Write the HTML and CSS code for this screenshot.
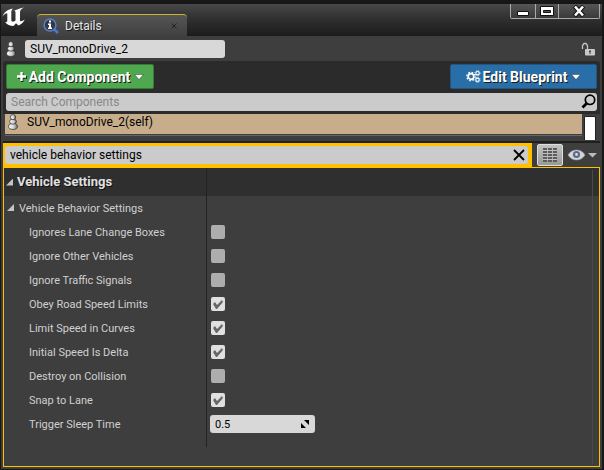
FILE: index.html
```html
<!DOCTYPE html>
<html lang="en">
<head>
<meta charset="utf-8">
<title>Details</title>
<link rel="stylesheet" href="styles.css">
</head>
<body>
<svg class="defs" aria-hidden="true">
  <defs>
    <linearGradient id="metal" x1="0" x2="1" y1="0" y2="0">
      <stop offset="0" stop-color="#ffffff"/><stop offset=".6" stop-color="#d0d0d0"/><stop offset="1" stop-color="#666"/>
    </linearGradient>
    <symbol id="pawn" viewBox="0 0 10 16">
      <g fill="url(#metal)" stroke="#222" stroke-width=".7">
        <ellipse cx="5" cy="12.4" rx="4.4" ry="3"/><ellipse cx="5" cy="7.6" rx="3.4" ry="2.6"/><circle cx="5" cy="3.2" r="2.6"/>
      </g>
    </symbol>
  </defs>
</svg>
<div class="window">
  <header class="titlebar">
    <svg class="logo" viewBox="0 0 24 22" role="img" aria-label="Unreal">
      <path fill="#fff" d="M.5 11.500C2 7 5.500 4.500 11 3.500 9.500 5 9.300 6 9.300 7.500V15c0 2 2.500 2.200 4.200.5V7.500c0-1.200-.5-1.700-1.500-1.500C14 4.500 17 3.700 22 2.500c-2.500 1.300-4 2.500-4 5V15c0 1.600 1.500 1.800 4.800-.5C21.500 17.500 19 19.500 16.500 20.500L14 18.300 11.500 21C8 20.800 5 19.500 3 17.200c1.500.2 2.300-.4 2.300-2V9c0-1.500-2.300-.5-4.800 2.500z"/>
    </svg>
    <div class="tab">
      <svg class="info" viewBox="0 0 16 16" aria-hidden="true">
        <path d="M11 11l4 4" stroke="#4a75d0" stroke-width="2.6"/>
        <circle cx="7" cy="7" r="5.9" fill="#343942" stroke="#5580cc" stroke-width="1.5"/>
        <path d="M6 2.5h2v2H6zM5 5.5h3v4h1v1.500H5V9.500h1V7H5z" fill="#fff"/>
      </svg>
      <span class="tab-name">Details</span>
      <button class="tab-close" aria-label="Close tab"><svg viewBox="0 0 6 6"><path d="M.5.5l5 5m0-5l-5 5" stroke="#222" stroke-width="1"/></svg></button>
    </div>
    <div class="controls">
      <button class="control" aria-label="Minimize"><svg viewBox="0 0 14 12"><path d="M1.500 6.500h11v4h-11z" fill="#fff" stroke="#111"/></svg></button>
      <button class="control narrow" aria-label="Maximize"><svg viewBox="0 0 14 12"><path d="M.5 1.500h13v9H.5z" fill="#fff" stroke="#111"/><path d="M3.500 5.500h7v2h-7z" fill="#555" stroke="#111"/></svg></button>
      <button class="control wide" aria-label="Close"><svg viewBox="0 0 14 12"><path d="M2.500 1l9 10m0-10l-9 10" stroke="#111" stroke-width="4.500"/><path d="M3 1.500l8 9m0-9l-8 9" stroke="#fff" stroke-width="2.600"/></svg></button>
    </div>
  </header>

  <main class="panel">
    <div class="name-row">
      <svg class="pawn"><use href="#pawn"/></svg>
      <input class="field name" type="text" aria-label="Actor name" value="SUV_monoDrive_2">
      <button class="lock" aria-label="Lock"><svg viewBox="0 0 14 14"><path d="M1.500 7V3.500L3 1.500h2L6.500 3.500V7" fill="none" stroke="#c4c4c4" stroke-width="1.300"/><rect x="4" y="7" width="10" height="6.500" rx="1" fill="#c8c8c8"/><path d="M8 8.500h2v1.500H8zM8.500 10h1v2h-1z" fill="#444"/></svg></button>
    </div>

    <section class="components">
      <div class="actions">
        <button class="action green">
          <svg class="plus" viewBox="0 0 11 11"><path d="M6.200 2v9M2 6.500h9" stroke="#1a1a1a" stroke-width="2.400"/><path d="M5.500 1v9M1 5.500h9" stroke="#fff" stroke-width="2.400"/></svg>
          <span>Add Component</span>
          <svg class="arrow" viewBox="0 0 10 6"><path d="M.5.5h9L5 5.500z" fill="#fff" stroke="#1a1a1a" stroke-width=".4"/></svg>
        </button>
        <button class="action blue">
          <svg class="gears" viewBox="0 0 15 13"><g fill="none" stroke="#fff"><circle cx="5" cy="6.500" r="2.800" stroke-width="1.700"/><circle cx="5" cy="6.500" r="4.200" stroke-width="1.300" stroke-dasharray="1.650 1.650"/><circle cx="11.500" cy="3.200" r="1.700" stroke-width="1.100"/><circle cx="11.500" cy="3.200" r="2.600" stroke-width=".8" stroke-dasharray="1.020 1.020"/><circle cx="11.500" cy="9.800" r="1.700" stroke-width="1.100"/><circle cx="11.500" cy="9.800" r="2.600" stroke-width=".8" stroke-dasharray="1.020 1.020"/></g></svg>
          <span>Edit Blueprint</span>
          <svg class="arrow" viewBox="0 0 10 6"><path d="M.5.5h9L5 5.500z" fill="#fff" stroke="#1a1a1a" stroke-width=".4"/></svg>
        </button>
      </div>
      <div class="search">
        <input class="field muted" type="text" aria-label="Search Components" placeholder="Search Components">
        <svg class="glass" viewBox="0 0 15 15" aria-hidden="true"><circle cx="9" cy="5.800" r="4.700" fill="none" stroke="#000" stroke-width="1.700"/><path d="M5.500 9.500L1.500 13.500" stroke="#000" stroke-width="2.600"/></svg>
      </div>
    </section>

    <div class="tree">
      <div class="tree-list">
        <div class="tree-item"><svg class="pawn"><use href="#pawn"/></svg><span>SUV_monoDrive_2(self)</span></div>
      </div>
      <div class="thumb"></div>
    </div>

    <div class="filter-row">
      <div class="filter">
        <input class="field muted" type="text" aria-label="Filter settings" value="vehicle behavior settings">
        <button class="clear" aria-label="Clear filter"><svg viewBox="0 0 12 12"><path d="M1 1l10 10m0-10L1 11" stroke="#000" stroke-width="1.800"/></svg></button>
      </div>
      <button class="matrix" aria-label="Property matrix"><svg viewBox="0 0 14 14"><path d="M0 1h14M0 4h14M0 7h14M0 10h14M0 13h14" stroke="#5c5c5c" stroke-width="2" stroke-dasharray="4 1 4 1 4 0"/><path d="M0 2.500h14M0 5.500h14M0 8.500h14M0 11.500h14" stroke="#c0c0c0"/></svg></button>
      <button class="view" aria-label="View options"><svg viewBox="0 0 30 12"><path d="M1 6Q4 1 9.500 1T18 6Q15 11 9.500 11T1 6z" fill="#d5d5d5" stroke="#9a9a9a" stroke-width=".6"/><circle cx="9.500" cy="5.500" r="3.600" fill="#596b8d"/><circle cx="9.500" cy="5.500" r="1.400" fill="#d6dce8"/><path d="M21 4h9l-4.500 4.500z" fill="#bbb"/></svg></button>
    </div>

    <section class="details">
      <h2 class="category"><span class="twist"></span>Vehicle Settings</h2>
      <div class="grid">
        <div class="group"><span class="twist"></span>Vehicle Behavior Settings</div><div class="cell"></div>
        <label class="label" for="p1">Ignores Lane Change Boxes</label><div class="cell"><input class="check" type="checkbox" id="p1"></div>
        <label class="label" for="p2">Ignore Other Vehicles</label><div class="cell"><input class="check" type="checkbox" id="p2"></div>
        <label class="label" for="p3">Ignore Traffic Signals</label><div class="cell"><input class="check" type="checkbox" id="p3"></div>
        <label class="label" for="p4">Obey Road Speed Limits</label><div class="cell"><input class="check" type="checkbox" id="p4" checked></div>
        <label class="label" for="p5">Limit Speed in Curves</label><div class="cell"><input class="check" type="checkbox" id="p5" checked></div>
        <label class="label" for="p6">Initial Speed Is Delta</label><div class="cell"><input class="check" type="checkbox" id="p6" checked></div>
        <label class="label" for="p7">Destroy on Collision</label><div class="cell"><input class="check" type="checkbox" id="p7"></div>
        <label class="label" for="p8">Snap to Lane</label><div class="cell"><input class="check" type="checkbox" id="p8" checked></div>
        <label class="label" for="p9">Trigger Sleep Time</label>
        <div class="cell"><div class="spin"><input class="field number" type="text" id="p9" value="0.5"><svg viewBox="0 0 8 8" aria-hidden="true"><path d="M3 0h5v5zM0 3v5h5z" fill="#000"/></svg></div></div>
        <div></div><div class="cell tail"></div>
      </div>
    </section>
  </main>
</div>
</body>
</html>
```

FILE: styles.css
```css
* { box-sizing: border-box; }
body {
  margin: 0;
  min-height: 100vh;
  display: flex;
  background: #171717;
  color: #d0d0d0;
  font: 12px/16px Roboto, "Liberation Sans", sans-serif;
}
button, input { font: inherit; color: inherit; margin: 0; padding: 0; border: 0; background: none; }
button { display: flex; align-items: center; justify-content: center; }
svg { display: block; flex: none; }
.defs { position: absolute; width: 0; height: 0; }

.window { flex: 1; display: flex; flex-direction: column; margin: 4px 2px 1px 1px; min-width: 0; }
.titlebar {
  display: flex;
  height: 32px;
  background: linear-gradient(#484848, #303030 45%, #1c1c1c);
}
.logo { width: 24px; height: 22px; margin: 1px 11px 0 1px; }
.tab {
  display: flex;
  align-items: center;
  width: 150px;
  height: 22px;
  margin-top: 10px;
  padding: 0 10px 0 6px;
  border-top: 1px solid #cdb52a;
  border-radius: 4px 4px 0 0;
  background: linear-gradient(#555, #404040);
  text-shadow: 1px 1px #1a1a1a;
}
.info { width: 16px; height: 16px; margin-right: 6px; }
.tab-name { flex: 1; color: #e6e6e6; }
.tab-close svg { width: 6px; height: 6px; }
.controls { display: flex; height: 15px; margin: 0 2px 0 auto; }
.control { width: 26px; border: 1px solid #aaa; border-top: 0; border-left-width: 0; background: linear-gradient(#555, #3a3a3a); }
.control:first-child { border-left-width: 1px; border-radius: 0 0 0 2px; }
.control.narrow { width: 23px; }
.control.wide { width: 41px; border-radius: 0 0 2px 0; }
.control svg { width: 14px; height: 12px; }

.panel { flex: 1; display: flex; flex-direction: column; background: #3e3e3e; padding: 0 2px 2px; }
.name-row { display: flex; align-items: center; height: 25px; padding: 0 5px 0 3px; }
.pawn { width: 10px; height: 16px; }
.field {
  display: block;
  height: 18px;
  padding: 0 5px;
  border-radius: 3px;
  background: #d8d8d8;
  color: #000;
  min-width: 0;
}
.name { width: 200px; margin-left: 9px; }
.lock { margin-left: auto; }
.lock svg { width: 14px; height: 14px; }

.components { background: #2b2b2b; padding: 3px 3px; border-radius: 3px 3px 0 0; }
.actions { display: flex; justify-content: space-between; height: 25px; }
.action { gap: 2px; padding: 0 6px; border-radius: 2px; color: #fff; font-size: 14px; font-weight: 700; text-shadow: 1px 1px #1a1a1a; }
.green { width: 148px; background: #4fa84f; border: 1px solid #367b38; }
.blue { width: 147px; background: #2a6ea8; border: 1px solid #205681; }
.plus { width: 11px; height: 11px; }
.gears { width: 15px; height: 13px; }
.arrow { width: 10px; height: 6px; margin-left: 2px; }
.search { position: relative; margin-top: 4px; }
.search .field, .filter .field { width: 100%; }
.muted { background: #cbcbcb; }
.muted::placeholder { color: #888; opacity: 1; }
.glass { position: absolute; right: 1px; top: 1px; width: 15px; height: 15px; }

.tree { display: flex; gap: 2px; height: 29px; padding: 0 4px 0 2px; border-bottom: 2px solid #202020; }
.tree-list { flex: 1; height: 22px; border-bottom: 1px solid #666; }
.tree-item { display: flex; align-items: flex-start; gap: 9px; height: 20px; padding: 0 3px; background: #c8ad8b; color: #000; }
.thumb { width: 12px; height: 24px; margin-top: 2px; background: #fff; border: 1px solid #222; border-bottom: 0; border-radius: 2px 2px 0 0; }

.filter-row { display: flex; align-items: center; height: 24px; padding-right: 3px; }
.filter { position: relative; flex: 1; align-self: stretch; padding: 3px 4px 3px 2px; background: #ffc000; }
.clear { position: absolute; right: 7px; top: 6px; }
.clear svg { width: 12px; height: 12px; }
.matrix { width: 26px; height: 22px; margin: 0 4px 0 5px; background: linear-gradient(#c2c2c2, #999); border: 1px solid #ddd; border-radius: 2px; }
.matrix svg { width: 14px; height: 14px; }
.view svg { width: 30px; height: 12px; }

.details { flex: 1; position: relative; display: flex; flex-direction: column; border: 1px solid #ffc000; }
.details::after { content: ""; position: absolute; right: 6px; top: 2px; bottom: 2px; width: 1px; background: #4a4a4a; }
.category {
  display: flex;
  align-items: center;
  height: 28px;
  margin: 0;
  background: linear-gradient(90deg, transparent 202px, #232323 202px, #232323 203px, transparent 203px), #2f2f2f;
  color: #e0e0e0;
  font-size: 13px;
  line-height: 16px;
  text-shadow: 1px 1px #111;
  padding-left: 2px;
}
.twist { width: 7px; height: 7px; margin-right: 4px; background: #c4c4c4; clip-path: polygon(100% 0, 100% 100%, 0 100%); }
.grid { display: grid; grid-template-columns: 202px 1fr; grid-auto-rows: 24px; font-size: 11px; }
.group { display: flex; align-items: center; padding: 1px 0 0 3px; }
.group .twist { margin: 0 5px 2px 0; }
.label { padding: 1px 0 0 25px; line-height: 24px; white-space: nowrap; }
.cell { display: flex; align-items: center; padding-left: 3px; border-left: 1px solid #232323; }
.tail { height: 11px; }
.check { appearance: none; width: 14px; height: 14px; margin-left: 1px; border-radius: 2px; background: #adadad; }
.check:checked { background: #e0e0e0; }
.check:checked::before { content: ""; display: block; width: 14px; height: 14px; background: #666; clip-path: polygon(2px 7px, 4px 5px, 6px 8px, 11px 3px, 12px 5px, 6px 12px, 5px 12px); }
.spin { position: relative; width: 105px; }
.number { width: 100%; }
.spin svg { position: absolute; right: 6px; top: 5px; width: 8px; height: 8px; }
```
